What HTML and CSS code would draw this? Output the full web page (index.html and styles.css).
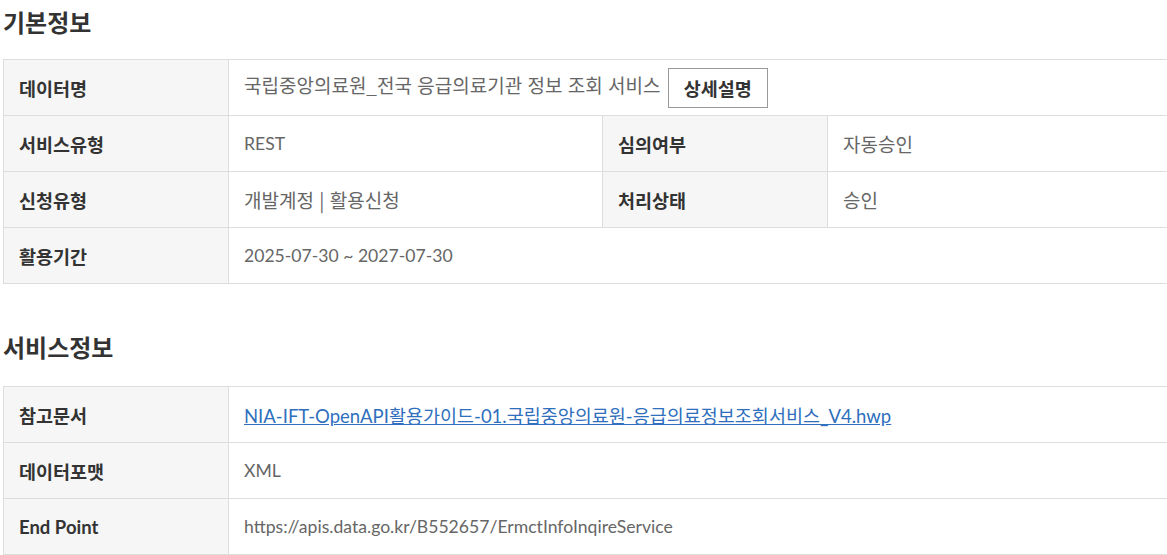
FILE: index.html
```html
<!DOCTYPE html>
<html lang="ko">
<head>
    <meta charset="UTF-8">
    <meta name="viewport" content="width=device-width, initial-scale=1.0">
    <title>활용신청 상세</title>
    <link rel="stylesheet" href="styles.css">
</head>
<body>

<section class="info-section">
    <h2 class="section-title">기본정보</h2>
    <table class="info-table">
        <colgroup>
            <col class="col-th">
            <col class="col-td">
            <col class="col-th">
            <col>
        </colgroup>
        <tr>
            <th>데이터명</th>
            <td colspan="3">
                국립중앙의료원_전국 응급의료기관 정보 조회 서비스
                <button class="btn-detail" type="button">상세설명</button>
            </td>
        </tr>
        <tr>
            <th>서비스유형</th>
            <td class="latin">REST</td>
            <th>심의여부</th>
            <td>자동승인</td>
        </tr>
        <tr>
            <th>신청유형</th>
            <td>개발계정 | 활용신청</td>
            <th>처리상태</th>
            <td>승인</td>
        </tr>
        <tr>
            <th>활용기간</th>
            <td class="latin" colspan="3">2025-07-30 ~ 2027-07-30</td>
        </tr>
    </table>
</section>

<section class="info-section">
    <h2 class="section-title">서비스정보</h2>
    <table class="info-table">
        <colgroup>
            <col class="col-th">
            <col>
        </colgroup>
        <tr>
            <th>참고문서</th>
            <td class="doc"><a href="#">NIA-IFT-OpenAPI활용가이드-01.국립중앙의료원-응급의료정보조회서비스_V4.hwp</a></td>
        </tr>
        <tr>
            <th>데이터포맷</th>
            <td class="latin">XML</td>
        </tr>
        <tr>
            <th class="latin">End Point</th>
            <td class="latin">https://apis.data.go.kr/B552657/ErmctInfoInqireService</td>
        </tr>
    </table>
</section>

</body>
</html>
```

FILE: styles.css
```css
/* Page */
body {
    margin: 0;
    padding: 4px 0 0 3px;
    background: #fff;
    font-family: "Noto Sans CJK KR", "Noto Sans", sans-serif;
    color: #333;
    overflow: hidden;
}

/* Section blocks */
.info-section + .info-section {
    margin-top: 45px;
}

.section-title {
    margin: 0 0 19px;
    font-size: 24px;
    line-height: 36px;
    font-weight: bold;
    color: #333;
}

.info-section + .info-section .section-title {
    margin-bottom: 21px;
}

/* Info table */
.info-table {
    width: 1180px;
    border-collapse: collapse;
    table-layout: fixed;
    border-top: 1px solid #ddd;
    border-left: 1px solid #ddd;
}

.col-th {
    width: 225px;
}

.col-td {
    width: 374px;
}

.info-table th,
.info-table td {
    height: 56px;
    padding: 0 15px;
    border-bottom: 1px solid #ddd;
    border-right: 1px solid #ddd;
    font-size: 19px;
    text-align: left;
    vertical-align: middle;
    box-sizing: border-box;
}

.info-table th {
    background: #f6f6f6;
    font-size: 18.5px;
    font-weight: bold;
    color: #333;
}

.info-table td {
    color: #666;
    white-space: nowrap;
}

/* latin-only cells use a narrower face, like the original's system font */
.info-table .latin {
    font-family: Lato, "Noto Sans CJK KR", sans-serif;
    font-size: 17.6px;
}

.info-table th.latin {
    font-size: 18.5px;
}

.info-table .doc {
    font-family: Lato, "Noto Sans CJK KR", sans-serif;
    font-size: 18.5px;
}

.info-table a {
    color: #2f6fbd;
    text-decoration: underline;
}

/* Detail button */
.btn-detail {
    width: 100px;
    height: 40px;
    margin-left: 2px;
    padding: 0;
    background: #fff;
    border: 1px solid #999;
    font-family: inherit;
    font-size: 18.5px;
    font-weight: bold;
    color: #333;
    vertical-align: middle;
    cursor: pointer;
}
```
